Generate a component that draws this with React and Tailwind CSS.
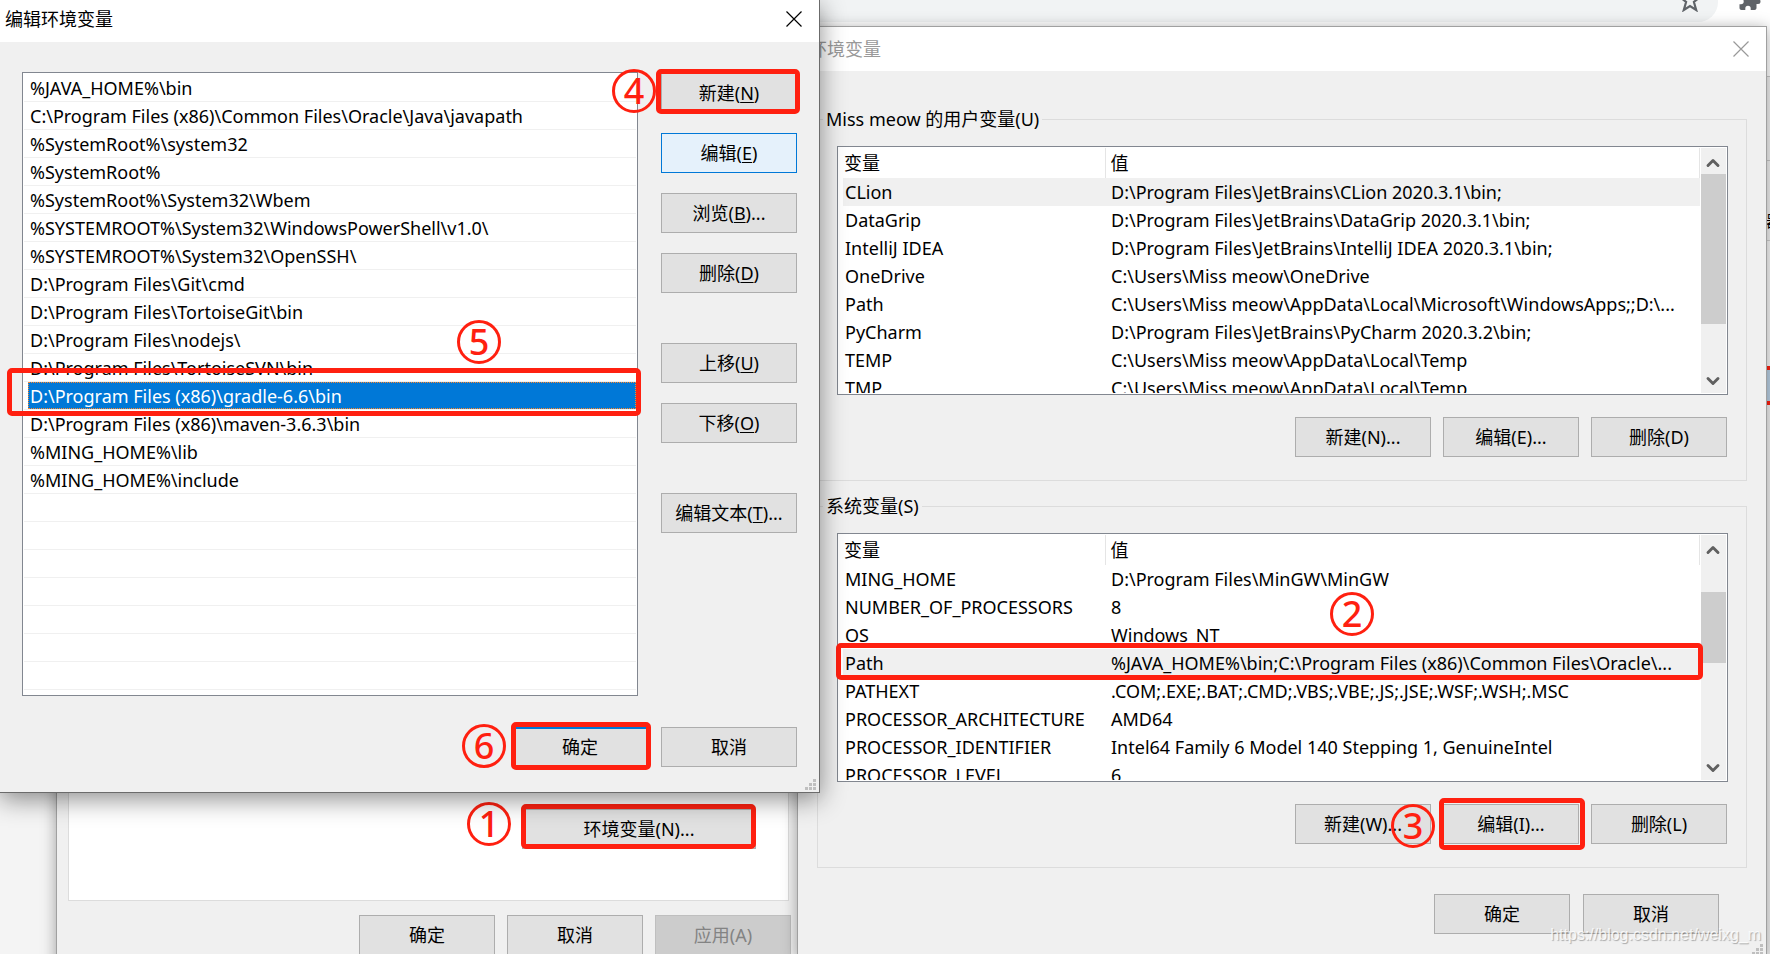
import React, { useState } from 'react';
import { ChevronDown, ChevronUp } from 'lucide-react';

const pathEntries = [
  '%JAVA_HOME%\\bin',
  'C:\\Program Files (x86)\\Common Files\\Oracle\\Java\\javapath',
  '%SystemRoot%\\system32',
  '%SystemRoot%',
  '%SystemRoot%\\System32\\Wbem',
  '%SYSTEMROOT%\\System32\\WindowsPowerShell\\v1.0\\',
  '%SYSTEMROOT%\\System32\\OpenSSH\\',
  'D:\\Program Files\\Git\\cmd',
  'D:\\Program Files\\TortoiseGit\\bin',
  'D:\\Program Files\\nodejs\\',
  'D:\\Program Files\\TortoiseSVN\\bin',
  'D:\\Program Files (x86)\\gradle-6.6\\bin',
  'D:\\Program Files (x86)\\maven-3.6.3\\bin',
  '%MING_HOME%\\lib',
  '%MING_HOME%\\include',
  '', '', '', '', '', '', '',
];

const userVariables = [
  ['CLion', 'D:\\Program Files\\JetBrains\\CLion 2020.3.1\\bin;'],
  ['DataGrip', 'D:\\Program Files\\JetBrains\\DataGrip 2020.3.1\\bin;'],
  ['IntelliJ IDEA', 'D:\\Program Files\\JetBrains\\IntelliJ IDEA 2020.3.1\\bin;'],
  ['OneDrive', 'C:\\Users\\Miss meow\\OneDrive'],
  ['Path', 'C:\\Users\\Miss meow\\AppData\\Local\\Microsoft\\WindowsApps;;D:\\...'],
  ['PyCharm', 'D:\\Program Files\\JetBrains\\PyCharm 2020.3.2\\bin;'],
  ['TEMP', 'C:\\Users\\Miss meow\\AppData\\Local\\Temp'],
  ['TMP', 'C:\\Users\\Miss meow\\AppData\\Local\\Temp'],
];

const systemVariables = [
  ['MING_HOME', 'D:\\Program Files\\MinGW\\MinGW'],
  ['NUMBER_OF_PROCESSORS', '8'],
  ['OS', 'Windows_NT'],
  ['Path', '%JAVA_HOME%\\bin;C:\\Program Files (x86)\\Common Files\\Oracle\\...'],
  ['PATHEXT', '.COM;.EXE;.BAT;.CMD;.VBS;.VBE;.JS;.JSE;.WSF;.WSH;.MSC'],
  ['PROCESSOR_ARCHITECTURE', 'AMD64'],
  ['PROCESSOR_IDENTIFIER', 'Intel64 Family 6 Model 140 Stepping 1, GenuineIntel'],
  ['PROCESSOR_LEVEL', '6'],
];

const Button = ({ className = 'border-[#adadad] bg-[#e1e1e1]', label, hotkey, tail = '', ...rest }) => (
  <button type="button" className={`h-10 w-[136px] border text-center leading-9 whitespace-nowrap ${className}`} {...rest}>
    {label}
    {hotkey && <>(<u className="underline-offset-2">{hotkey}</u>)</>}
    {tail}
  </button>
);

// red frame drawn over its relative parent
const Mark = ({ className }) => (
  <span className={`pointer-events-none absolute rounded-[5px] border-5 border-[#ff2010] ${className}`} />
);

const Step = ({ n, className }) => (
  <span
    className={`pointer-events-none absolute flex size-11 items-center justify-center rounded-full border-3 border-[#ff2010] text-4xl font-medium text-[#ff2010] ${className}`}
  >
    {n}
  </span>
);

const CloseButton = ({ className }) => (
  <button type="button" aria-label="关闭" className={className}>
    <svg width="16" height="16" viewBox="0 0 16 16" fill="none" stroke="currentColor" strokeWidth="1.2">
      <path d="M0.5 0.5 L15.5 15.5 M15.5 0.5 L0.5 15.5" />
    </svg>
  </button>
);

const Grip = () => (
  <svg className="absolute right-[3px] bottom-[2px]" width="11" height="11" viewBox="0 0 11 11" fill="#bfbfbf">
    <path d="M8 0h3v3h-3z M4 4h3v3h-3z M8 4h3v3h-3z M0 8h3v3h-3z M4 8h3v3h-3z M8 8h3v3h-3z" />
  </svg>
);

const VariableTable = ({ rows, selected, thumb }) => (
  <div className="flex h-[249px] overflow-hidden border border-[#828790] bg-white py-px pr-px pl-[5px]">
    <div className="min-w-0 flex-1 overflow-hidden">
      <table className="w-full table-fixed text-left whitespace-nowrap">
        <thead>
          <tr className="h-[30px] leading-[30px]">
            <th className="w-[262px] border-r border-[#e5e5e5] p-0 pl-px font-normal">变量</th>
            <th className="border-r border-[#e5e5e5] p-0 pl-[5px] font-normal">值</th>
          </tr>
        </thead>
        <tbody>
          {rows.map(([name, value]) => (
            <tr key={name} className={`h-7 leading-7 ${name === selected ? 'bg-[#f0f0f0]' : ''}`}>
              <td className="p-0 pl-[2px]">{name}</td>
              <td className="p-0 pl-[6px]">{value}</td>
            </tr>
          ))}
        </tbody>
      </table>
    </div>
    <div className="ml-px flex w-[25px] flex-col bg-[#f0f0f0]">
      <button type="button" aria-label="向上滚动" className="flex h-[26px] shrink-0 items-center justify-center pt-[3px] pr-px text-[#606060]">
        <ChevronUp size={20} strokeWidth={3.5} />
      </button>
      <div className="flex-1">
        <div className={`bg-[#cdcdcd] ${thumb}`} />
      </div>
      <button type="button" aria-label="向下滚动" className="flex h-[26px] shrink-0 items-center justify-center pt-px pr-px text-[#606060]">
        <ChevronDown size={20} strokeWidth={3.5} />
      </button>
    </div>
  </div>
);

const BrowserBackground = () => (
  <div className="absolute inset-0 bg-[#f4f4f4]">
    <div className="flex h-[76px] items-start bg-white">
      <div className="flex h-[22px] flex-1 items-start justify-end rounded-br-[20px] bg-[#f1f3f4] pr-[17px]">
        <svg className="-mt-3" width="22" height="24" viewBox="0 0 22 24" fill="none" stroke="#5f6368" strokeWidth="2.2">
          <path d="M11 3 L13.4 9.4 L20 9.8 L14.9 14 L17.2 22 L11 18 L4.8 22 L7.1 14 L2 9.8 L8.6 9.4 Z" />
        </svg>
      </div>
      <svg className="-mt-3 mr-[8px] ml-[19px]" width="25" height="24" viewBox="0 0 24 24" fill="#5f6368">
        <path d="M20.5 11H19V7c0-1.1-.9-2-2-2h-4V3.500a2.500 2.500 0 0 0-5 0V5H4c-1.100 0-2 .9-2 2v3.800h1.500a2.700 2.700 0 0 1 0 5.400H2V20c0 1.100.9 2 2 2h3.800v-1.500a2.700 2.700 0 0 1 5.400 0V22H17c1.100 0 2-.9 2-2v-4h1.500a2.500 2.500 0 0 0 0-5z" />
      </svg>
    </div>
    {/* sliver of the page right of the dialogs */}
    <div className="ml-auto flex h-[878px] w-1 flex-col overflow-hidden border-t border-[#c8c8c8] bg-[#f0f0f0]">
      <div className="h-[84px] border-b border-[#c8c8c8]" />
      <div className="h-[80px] overflow-hidden border-b border-[#d0d0d0] pt-[50px] text-base leading-5">器</div>
      <div className="h-[125px] bg-[#f6f6f6]" />
      <div className="h-[39px] border-y-4 border-[#ff2010] bg-[#b9d0e4]" />
    </div>
  </div>
);

// 系统属性
const SystemPropertiesWindow = () => (
  <section className="absolute top-[700px] left-[56px] w-[760px] border border-[#a0a0a0] bg-[#f0f0f0] pt-[19px] pb-10 pl-[11px] shadow-[0_0_14px_rgba(0,0,0,0.35)]">
    <div className="flex w-[721px] justify-end border border-[#dcdcdc] bg-white pt-[88px] pr-[32px] pb-[51px]">
      <div className="relative flex w-[234px]">
        <button type="button" className="h-10 flex-1 border border-[#adadad] bg-[#e1e1e1] leading-9">环境变量(N)...</button>
        <Mark className="-top-[5px] right-0 bottom-0 -left-px" />
        <Step n={1} className="top-[-7px] left-[-55px]" />
      </div>
    </div>
    <div className="mt-[14px] flex w-[723px] justify-end gap-3">
      <Button label="确定" />
      <Button label="取消" />
      <Button label="应用(A)" disabled className="border-[#bfbfbf] bg-[#cccccc] text-[#838383]" />
    </div>
  </section>
);

const EnvironmentWindow = () => (
  <section className="absolute top-[26px] right-[3px] left-[797px] border border-[#a0a0a0] bg-[#f0f0f0] shadow-[0_2px_14px_rgba(0,0,0,0.35)]">
    <header className="flex h-[44px] items-center justify-between bg-white pr-[17px] pl-[11px] text-[#999999]">
      <h2>环境变量</h2>
      <CloseButton />
    </header>
    <div className="px-[19px] pt-9 pb-[23px]">
      <fieldset className="border border-[#dcdcdc] pr-[18px] pb-[23px] pl-[19px]">
        <legend className="-ml-[14px] px-[3px] leading-6">Miss meow 的用户变量(U)</legend>
        <div className="pt-[15px]">
          <VariableTable rows={userVariables} selected="CLion" thumb="h-[150px]" />
        </div>
        <div className="mt-[22px] mr-px flex justify-end gap-3">
          <Button label="新建(N)..." />
          <Button label="编辑(E)..." />
          <Button label="删除(D)" />
        </div>
      </fieldset>

      <fieldset className="mt-[13px] border border-[#dcdcdc] pr-[18px] pb-[23px] pl-[19px]">
        <legend className="-ml-[14px] px-[3px] leading-6">系统变量(S)</legend>
        <div className="relative pt-[15px]">
          <VariableTable rows={systemVariables} selected="Path" thumb="mt-[31px] h-[71px]" />
          <Mark className="top-[125px] right-[25px] -left-px h-[37px]" />
          <Step n={2} className="top-[74px] right-[354px]" />
        </div>
        <div className="mt-[22px] mr-px flex justify-end gap-3">
          <Button label="新建(W)..." />
          <div className="relative">
            <Button label="编辑(I)..." />
            <Mark className="-top-[6px] -right-[6px] -bottom-[6px] -left-[4px]" />
            <Step n={3} className="top-0 left-[-52px]" />
          </div>
          <Button label="删除(L)" />
        </div>
      </fieldset>

      <div className="mt-[26px] mr-[28px] flex justify-end gap-[13px]">
        <Button label="确定" />
        <Button label="取消" />
      </div>
    </div>
    <Grip />
  </section>
);

const EditPathWindow = () => {
  const [selected, setSelected] = useState(11);

  return (
    <section className="absolute top-0 left-0 w-[820px] border-r border-b border-[#6b6b6b] bg-[#f0f0f0] shadow-[0_6px_24px_rgba(0,0,0,0.45)]">
      <header className="flex h-[42px] items-center justify-between bg-white pr-[17px] pb-1 pl-[5px]">
        <h1>编辑环境变量</h1>
        <CloseButton />
      </header>
      <div className="px-[22px] pt-[30px] pb-[25px]">
        <div className="flex gap-[23px]">
          <div className="relative flex-1">
            <ul className="h-[624px] border border-[#828790] bg-white p-px">
              {pathEntries.map((entry, index) => (
                <li
                  key={index}
                  onClick={() => setSelected(index)}
                  className="h-7 border-b border-[#f0f0f0] pl-1 leading-7 whitespace-nowrap"
                >
                  <div className={`h-[27px] pl-[2px] ${index === selected ? 'bg-[#0078d7] text-white outline outline-dotted -outline-offset-1 outline-[#ff8728]' : ''}`}>
                    {entry}
                  </div>
                </li>
              ))}
            </ul>
            <Mark className="top-[296px] -right-[3px] -left-[15px] h-[48px]" />
            <Step n={5} className="top-[248px] left-[435px]" />
          </div>
          <div className="flex flex-col gap-5 pt-px">
            <div className="relative">
              <Button label="新建" hotkey="N" />
              <Mark className="-top-[4px] -right-[3px] -bottom-px -left-[5px]" />
              <Step n={4} className="top-[-4px] left-[-49px]" />
            </div>
            <Button label="编辑" hotkey="E" className="border-[#0078d7] bg-[#e5f1fb]" />
            <Button label="浏览" hotkey="B" tail="..." />
            <Button label="删除" hotkey="D" />
            <div className="mt-[30px] flex flex-col gap-5">
              <Button label="上移" hotkey="U" />
              <Button label="下移" hotkey="O" />
            </div>
            <div className="mt-[30px]">
              <Button label="编辑文本" hotkey="T" tail="..." />
            </div>
          </div>
        </div>
        <div className="mt-[31px] flex justify-end gap-[13px]">
          <div className="relative">
            <Button label="确定" className="border-2 border-[#0078d7] bg-[#e1e1e1]" />
            <Mark className="-top-[5px] -right-[3px] -bottom-[3px] -left-px" />
            <Step n={6} className="top-[-3px] left-[-50px]" />
          </div>
          <Button label="取消" />
        </div>
      </div>
      <Grip />
    </section>
  );
};

const App = () => (
  <main className="relative h-screen overflow-hidden font-['Noto_Sans','Noto_Sans_CJK_SC',sans-serif] text-lg text-black">
    <BrowserBackground />
    <SystemPropertiesWindow />
    <EnvironmentWindow />
    <EditPathWindow />
    <span className="pointer-events-none absolute right-[9px] bottom-[7px] font-['Liberation_Sans',sans-serif] text-base leading-6 text-white/80 [text-shadow:1px_1px_1px_rgba(0,0,0,0.3)]">
      https://blog.csdn.net/weixg_m
    </span>
  </main>
);

export default App;
